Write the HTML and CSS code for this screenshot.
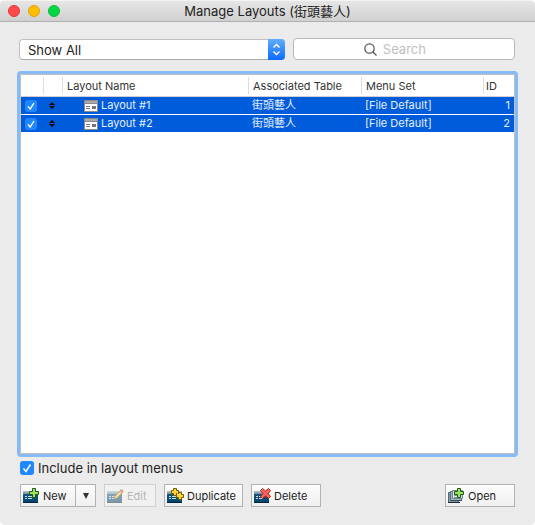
FILE: index.html
```html
<!DOCTYPE html>
<html lang="en">
<head>
<meta charset="utf-8">
<title>Manage Layouts</title>
<link rel="stylesheet" href="styles.css">
</head>
<body>
<svg class="defs" aria-hidden="true">
  <defs>
    <linearGradient id="body" x1="0" y1="0" x2="0" y2="1"><stop offset="0" stop-color="#1d5c80"/><stop offset="1" stop-color="#00436a"/></linearGradient>
    <linearGradient id="bar" x1="0" y1="0" x2="0" y2="1"><stop offset="0" stop-color="#b8c8d2"/><stop offset="1" stop-color="#6e8798"/></linearGradient>
    <g id="base">
      <path d="M0 3h15v12H0z" fill="url(#body)"/>
      <path d="M0 3h15v3H0z" fill="url(#bar)"/>
      <path d="M0 14h15v1H0z" fill="#00263e"/>
      <path d="M2 8h2v1H2zM5 8h4v1H5zM2 10h2v1H2zM5 10h4v1H5z" fill="#c5dbe6"/>
    </g>
    <path id="plus" d="M3.500 .5h3v3h3v3h-3v3h-3v-3h-3v-3h3z"/>
    <g id="layout">
      <path d="M0 0h14v12H0z" fill="#8b8b8b"/>
      <path d="M1 1h12v2H1z" fill="#aaa"/>
      <path d="M1 4h12v7H1z" fill="#fff"/>
      <path d="M2 6h4v1H2zM2 8h4v1H2zM8 6h4v3H8z" fill="#777"/>
    </g>
    <path id="sort" d="M0 3L3 0l3 3zM0 4h6L3 7z"/>
  </defs>
</svg>
<main class="window">
  <header class="titlebar">
    <div class="lights">
      <button class="light close" aria-label="Close"></button>
      <button class="light minimize" aria-label="Minimize"></button>
      <button class="light maximize" aria-label="Zoom"></button>
    </div>
    <h1>Manage Layouts (街頭藝人)</h1>
  </header>

  <div class="filters">
    <div class="popup">
      <select aria-label="Show layouts"><option>Show All</option></select>
      <svg class="popup-arrows" viewBox="0 0 17 21" aria-hidden="true"><path d="M5.500 8.500l3-3 3 3M5.500 12.500l3 3 3-3"/></svg>
    </div>
    <div class="search">
      <svg viewBox="0 0 13 13" aria-hidden="true"><circle cx="5.500" cy="5.500" r="4.700"/><path d="M9 9l3.500 3.500"/></svg>
      <input type="text" placeholder="Search" aria-label="Search">
    </div>
  </div>

  <section class="list">
    <table>
      <colgroup><col class="col-check"><col class="col-sort"><col class="col-name"><col class="col-table"><col class="col-menu"><col class="col-id"></colgroup>
      <thead>
        <tr><th></th><th></th><th>Layout Name</th><th>Associated Table</th><th>Menu Set</th><th class="head-id">ID</th></tr>
      </thead>
      <tbody>
        <tr>
          <td><input type="checkbox" class="row-check" aria-label="Include Layout #1" checked></td>
          <td><svg class="sort" viewBox="0 0 6 7"><use href="#sort"/></svg></td>
          <td><span class="name"><svg class="layout" viewBox="0 0 14 12"><use href="#layout"/></svg>Layout #1</span></td>
          <td>街頭藝人</td><td>[File Default]</td><td class="id">1</td>
        </tr>
        <tr>
          <td><input type="checkbox" class="row-check" aria-label="Include Layout #2" checked></td>
          <td><svg class="sort" viewBox="0 0 6 7"><use href="#sort"/></svg></td>
          <td><span class="name"><svg class="layout" viewBox="0 0 14 12"><use href="#layout"/></svg>Layout #2</span></td>
          <td>街頭藝人</td><td>[File Default]</td><td class="id">2</td>
        </tr>
      </tbody>
    </table>
  </section>

  <label class="include"><input type="checkbox" checked>Include in layout menus</label>

  <footer class="actions">
    <div class="split">
      <button class="btn new"><svg viewBox="0 0 17 16"><use href="#base"/><use href="#plus" class="green" x="6"/></svg>New</button>
      <button class="btn more" aria-label="More new options"><svg viewBox="0 0 6 6"><path d="M0 0h6L3 6z"/></svg></button>
    </div>
    <button class="btn edit" disabled><svg viewBox="0 0 17 16"><use href="#base"/><path d="M7 11l1-3 6-6 2 2-6 6z" fill="#ffc83a" stroke="#8a5a16"/><path d="M13 3l1.500-2 2 2L15 5z" fill="#f0655b" stroke="#9c3a34" stroke-width=".5"/></svg>Edit</button>
    <button class="btn duplicate"><svg viewBox="0 0 17 16"><use href="#base"/><path class="yellow" d="M6.500 .5h3v2h2v2h3v2h2v3h-2v2h-3v-2h-2v-2h-3v-2h-2v-3h2z"/><path d="M9 5h1v2H9zM11 4h1v2h-1z" fill="#735a00"/></svg>Duplicate</button>
    <button class="btn delete"><svg viewBox="0 0 17 16"><use href="#base"/><path class="red" d="M8.500 .5l3 2.500 3-2.500 2 2-2.500 3 2.500 3-2 2-3-2.500-3 2.500-2-2 2.500-3-2.500-3z"/></svg>Delete</button>
    <button class="btn open"><svg viewBox="0 0 17 16"><path d="M.5 4.500h10v10H.5z" fill="#8298a2" stroke="#536b78"/><path d="M0 14h12v1H0z" fill="#152a35"/><path d="M2.500 3.500h11v9h-11z" fill="#a9bac2" stroke="#536b78"/><path d="M4.500 2.500h10v8h-10z" fill="#dde5e9" stroke="#6c838f"/><path d="M3 12h11v1H3z" fill="#304b5a"/><path d="M6 5h3v1H6zM6 7h3v1H6zM6 9h6v1H6z" fill="#8197a3"/><use href="#plus" class="green" x="6"/></svg>Open</button>
  </footer>
</main>
</body>
</html>
```
FILE: styles.css
```css
* { box-sizing: border-box; }

body {
  margin: 0;
  background: #fff;
  color: #222;
  font: 13px/16px Inter, "Noto Sans CJK TC", sans-serif;
}

button, input, select { margin: 0; font: inherit; color: inherit; }
svg { display: block; flex: none; }
.defs { position: absolute; width: 0; height: 0; }

.window {
  display: flex;
  flex-direction: column;
  min-height: 100vh;
  overflow: hidden;
  border-radius: 5px;
  background: #ebebeb;
}

.titlebar {
  display: grid;
  grid-template-columns: 60px 1fr 60px;
  align-items: center;
  height: 22px;
  padding: 0 8px;
  border-top: 1px solid #f4f4f4;
  border-bottom: 1px solid #b0b0b0;
  background: linear-gradient(#e6e6e6, #d0d0d0);
}
.titlebar h1 {
  margin: 0;
  font-size: 13px;
  font-weight: 400;
  text-align: center;
  white-space: nowrap;
}
.lights { display: flex; gap: 8px; }
.light {
  width: 12px;
  height: 12px;
  padding: 0;
  border: 1px solid;
  border-radius: 50%;
}
.close { background: #ff4a4a; border-color: #e0383b; }
.minimize { background: #ffbd00; border-color: #e0a012; }
.maximize { background: #00d742; border-color: #12b83c; }

.filters {
  display: flex;
  align-items: flex-end;
  gap: 8px;
  padding: 16px 20px 11px 19px;
}
.popup { position: relative; flex: 266; }
.popup select {
  display: block;
  width: 100%;
  height: 21px;
  padding: 0 24px 0 8px;
  appearance: none;
  border: 1px solid #c0c0c0;
  border-bottom-color: #a8a8a8;
  border-radius: 4px;
  background: #fff;
}
.popup-arrows {
  position: absolute;
  top: 0;
  right: 0;
  width: 17px;
  height: 21px;
  border-radius: 0 4px 4px 0;
  background: linear-gradient(#62aefc, #0a6aff);
  fill: none;
  stroke: #fff;
  stroke-width: 1.5;
  pointer-events: none;
}
.search { position: relative; flex: 222; }
.search input {
  display: block;
  width: 100%;
  height: 22px;
  padding: 0 8px 0 40%;
  border: 1px solid #b8b8b8;
  border-radius: 4px;
  background: #fff;
}
.search input::placeholder { color: #bfbfbf; opacity: 1; }
.search svg {
  position: absolute;
  top: 5px;
  left: 32%;
  width: 13px;
  height: 13px;
  fill: none;
  stroke: #555;
  stroke-width: 1.2;
}

.list {
  flex: 1;
  margin: 0 17px;
  border: 3px solid #86bbf5;
  border-radius: 4px;
  background: #fff;
  box-shadow: inset 0 0 0 1px #bfbfbf;
  padding: 1px;
}
table {
  width: 100%;
  table-layout: fixed;
  border-collapse: separate;
  border-spacing: 0;
  font-size: 11px;
}
.col-check { width: 23px; }
.col-sort { width: 19px; }
.col-table { width: 113px; }
.col-menu { width: 122px; }
.col-id { width: 30px; }
th, td { padding: 0 4px; text-align: left; white-space: nowrap; font-weight: 400; }
th {
  height: 22px;
  border-bottom: 1px solid #d0d0d0;
  background: linear-gradient(#ddd, #ddd) right center / 1px 17px no-repeat;
  color: #333;
}
th:last-child { background: none; }
.head-id { padding: 0 2px; }
td { height: 18px; border-bottom: 1px solid #fff; line-height: 17px; padding-left: 3px; background: #005cdb; background-clip: padding-box; color: #e6effc; }
td.id { text-align: right; }
.name { display: flex; align-items: center; gap: 3px; padding-left: 18px; }
.layout { width: 14px; height: 12px; }
.sort { width: 6px; height: 7px; margin-left: 2px; fill: #000; }

input[type="checkbox"] {
  display: block;
  flex: none;
  width: 14px;
  height: 14px;
  appearance: none;
  border-radius: 3px;
  background: #1f87ff url("data:image/svg+xml,%3Csvg xmlns='http://www.w3.org/2000/svg' viewBox='0 0 14 14'%3E%3Cpath d='M3.500 7.500l2.500 3 4.500-7' fill='none' stroke='white' stroke-width='1.600'/%3E%3C/svg%3E") center / 100% 100%;
}
input.row-check { width: 12px; height: 12px; margin-left: 1px; }

.include {
  display: flex;
  align-items: center;
  align-self: flex-start;
  gap: 4px;
  margin: 3px 20px 8px;
}

.actions {
  display: flex;
  gap: 8px;
  padding: 0 20px 18px;
  font-size: 11px;
}
.split { display: flex; }
.btn {
  display: flex;
  align-items: center;
  gap: 3px;
  height: 23px;
  padding: 0 5px 0 2px;
  border: 1px solid #b2b2b2;
  background: linear-gradient(#fcfcfc, #f0f0f0);
  color: #1c1c1c;
}
.btn svg { width: 17px; height: 16px; }
.new { width: 56px; }
.more { width: 21px; margin-left: -1px; padding: 0; justify-content: center; }
.more svg { width: 6px; height: 6px; fill: #333; }
.edit { width: 52px; color: #b5b5b5; border-color: #cfcfcf; background: #f1f1f1; }
.edit svg { opacity: .5; }
.duplicate { width: 79px; }
.delete, .open { width: 70px; }
.open { margin-left: auto; }
.green { fill: #9be05f; stroke: #22581c; }
.yellow { fill: #ffd43b; stroke: #735a00; }
.red { fill: #ff6259; stroke: #a32620; }
```
